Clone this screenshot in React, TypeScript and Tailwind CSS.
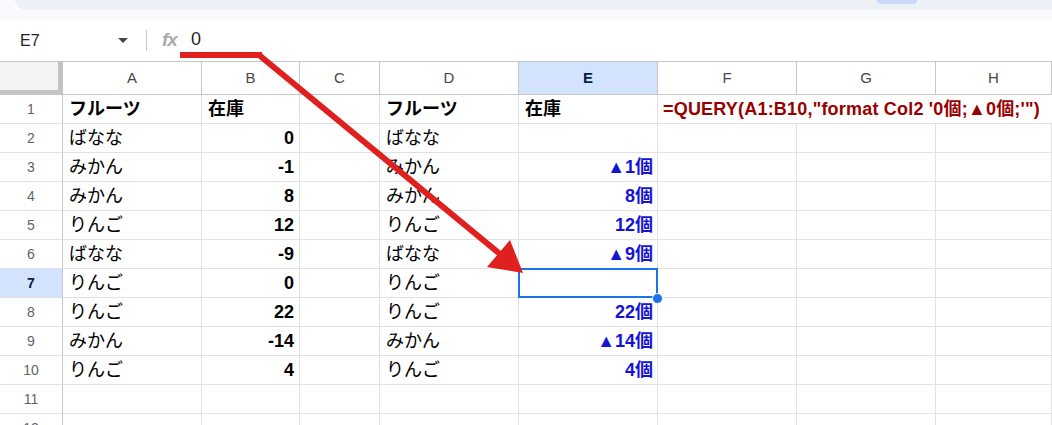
import React from "react";

const FONT = { fontFamily: '"Liberation Sans", "Noto Sans CJK JP", Arial, sans-serif' };

type Row = {
  a?: string;
  b?: string;
  d?: string;
  e?: string;
  f?: string;
  bold?: boolean;
};

const rows: Row[] = [
  { a: "フルーツ", b: "在庫", d: "フルーツ", e: "在庫", bold: true, f: "=QUERY(A1:B10,\"format Col2 '0個;▲0個;'\")" },
  { a: "ばなな", b: "0", d: "ばなな" },
  { a: "みかん", b: "-1", d: "みかん", e: "▲1個" },
  { a: "みかん", b: "8", d: "みかん", e: "8個" },
  { a: "りんご", b: "12", d: "りんご", e: "12個" },
  { a: "ばなな", b: "-9", d: "ばなな", e: "▲9個" },
  { a: "りんご", b: "0", d: "りんご" },
  { a: "りんご", b: "22", d: "りんご", e: "22個" },
  { a: "みかん", b: "-14", d: "みかん", e: "▲14個" },
  { a: "りんご", b: "4", d: "りんご", e: "4個" },
  {},
  {},
];

const colLetters = ["A", "B", "C", "D", "E", "F", "G", "H"];

function Cell({ children, className = "" }: { children?: React.ReactNode; className?: string }) {
  return (
    <div className={`h-[29px] border-r border-b border-[#e1e1e1] flex items-center overflow-hidden whitespace-nowrap text-[18px] text-black ${className}`}>
      {children}
    </div>
  );
}

export default function App() {
  return (
    <div className="relative w-[1052px] h-[425px] overflow-hidden bg-white" style={FONT}>
      {/* top chrome */}
      <div className="h-[10px] flex">
        <div className="w-[15px] bg-[#f8fafd]" />
        <div className="flex-1 bg-[#edf1f7] rounded-bl-[10px] relative">
          <div className="absolute left-[862px] top-0 w-[40px] h-[4px] bg-[#c9dafa] rounded-b-[4px]" />
        </div>
      </div>
      <div className="h-[10px] bg-[#f8fafd]" />

      {/* formula bar */}
      <div className="h-[42px] flex items-center border-b border-[#c4c7c5] bg-white">
        <div className="w-[146px] flex items-center pl-[20px] pr-[18px] h-full">
          <span className="text-[16px] text-[#1f1f1f] flex-1">E7</span>
          <svg width="10" height="6" viewBox="0 0 10 6" className="mt-[1px]">
            <path d="M0 0 L10 0 L5 5 Z" fill="#444746" />
          </svg>
        </div>
        <div className="w-px h-[21px] bg-[#c4c7c5]" />
        <span className="ml-[15px] text-[19px] italic text-[#a9abad] font-bold tracking-[-1px]">fx</span>
        <span className="ml-[14px] text-[18px] text-[#1f1f1f] -mt-[3px]">0</span>
      </div>

      {/* grid */}
      <div className="grid grid-cols-[63px_139px_98px_80px_139px_139px_139px_139px_1fr]">
        {/* header row */}
        <div className="h-[33px] bg-[#f3f3f3] border-r-[5px] border-b-[5px] border-[#c4c4c4]" />
        {colLetters.map((c) => (
          <div
            key={c}
            className={`h-[33px] border-r border-b border-[#c4c7c5] flex items-center justify-center text-[15px] ${
              c === "E" ? "bg-[#d3e3fd] text-[#041e49] font-bold" : "bg-white text-[#444746]"
            }`}
          >
            {c}
          </div>
        ))}

        {rows.map((r, i) => {
          const n = i + 1;
          const sel = n === 7;
          return (
            <React.Fragment key={n}>
              <div
                className={`h-[29px] border-r border-b border-r-[#c4c7c5] border-b-[#e1e1e1] flex items-center justify-center text-[14px] ${
                  sel ? "bg-[#d3e3fd] text-[#041e49] font-bold" : "bg-white text-[#5f6368]"
                }`}
              >
                {n}
              </div>
              <Cell className={`pl-[6px] ${r.bold ? "font-bold" : ""}`}>{r.a}</Cell>
              <Cell className={`${r.bold ? "pl-[6px]" : "justify-end pr-[5px]"} font-bold`}>{r.b}</Cell>
              <Cell />
              <Cell className={`pl-[6px] ${r.bold ? "font-bold" : ""}`}>{r.d}</Cell>
              <div className={`relative ${sel ? "z-10" : ""}`}>
                <Cell className={`${r.bold ? "pl-[6px] font-bold" : "justify-end pr-[4px] font-bold"}`}>
                  <span className={r.bold ? "text-black" : "text-[#1414d6]"}>{r.e}</span>
                </Cell>
                {sel && (
                  <>
                    <div className="absolute -left-px -top-px right-0 bottom-0 border-2 border-[#1a73e8]" />
                    <div className="absolute -right-[5px] -bottom-[6px] w-[11px] h-[11px] rounded-full bg-[#1a73e8] border border-white" />
                  </>
                )}
              </div>
              {r.f ? (
                <div className="col-span-3 h-[29px] border-b border-[#e1e1e1] flex items-center pl-[5px] whitespace-nowrap text-[18px] tracking-[0.2px] font-bold text-[#990000]">
                  {r.f}
                </div>
              ) : (
                <>
                  <Cell />
                  <Cell />
                  <Cell />
                </>
              )}
            </React.Fragment>
          );
        })}
      </div>

      {/* red arrow annotation */}
      <svg className="absolute left-0 top-0 pointer-events-none z-20" width="1052" height="425" viewBox="0 0 1052 425">
        <line x1="180" y1="55" x2="262" y2="55" stroke="#e01f1f" strokeWidth="6" />
        <line x1="259" y1="55" x2="500" y2="254" stroke="#e01f1f" strokeWidth="6" />
        <polygon points="523,273 487,267 510,240" fill="#e01f1f" />
      </svg>
    </div>
  );
}
